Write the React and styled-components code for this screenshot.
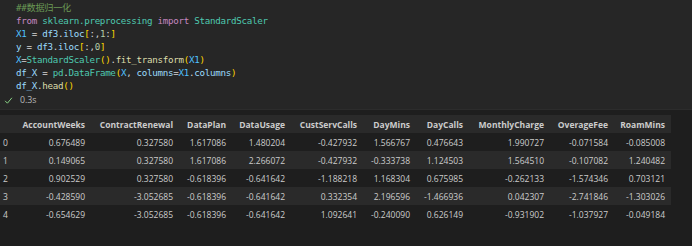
import React from "react";
import styled, { createGlobalStyle } from "styled-components";

const GlobalStyle = createGlobalStyle`
  html, body {
    margin: 0;
    padding: 0;
    background: #1e1e1e;
  }
`;

const code = [
  [["c", "##数据归一化"]],
  [["k", "from"], ["p", " "], ["m", "sklearn.preprocessing"], ["p", " "], ["k", "import"], ["p", " "], ["m", "StandardScaler"]],
  [["C", "X1"], ["p", " = "], ["v", "df3"], ["p", "."], ["v", "iloc"], ["b", "["], ["p", ":,"], ["n", "1"], ["p", ":"], ["b", "]"]],
  [["v", "y"], ["p", " = "], ["v", "df3"], ["p", "."], ["v", "iloc"], ["b", "["], ["p", ":,"], ["n", "0"], ["b", "]"]],
  [["C", "X"], ["p", "="], ["m", "StandardScaler"], ["b", "()"], ["p", "."], ["f", "fit_transform"], ["b", "("], ["C", "X1"], ["b", ")"]],
  [["v", "df_X"], ["p", " = "], ["m", "pd"], ["p", "."], ["m", "DataFrame"], ["b", "("], ["C", "X"], ["p", ", "], ["v", "columns"], ["p", "="], ["C", "X1"], ["p", "."], ["v", "columns"], ["b", ")"]],
  [["v", "df_X"], ["p", "."], ["f", "head"], ["b", "()"]],
];

const tokenColors = {
  c: "#6a9955",
  k: "#c586c0",
  m: "#4ec9b0",
  C: "#4fc1ff",
  v: "#9cdcfe",
  p: "#d4d4d4",
  b: "#ffd700",
  n: "#b5cea8",
  f: "#dcdcaa",
};

const columns = [
  { name: "", width: 13 },
  { name: "AccountWeeks", width: 78 },
  { name: "ContractRenewal", width: 88 },
  { name: "DataPlan", width: 53 },
  { name: "DataUsage", width: 59 },
  { name: "CustServCalls", width: 72 },
  { name: "DayMins", width: 53 },
  { name: "DayCalls", width: 53 },
  { name: "MonthlyCharge", width: 81 },
  { name: "OverageFee", width: 64 },
  { name: "RoamMins", width: 57 },
];

const rows = [
  ["0.676489", "0.327580", "1.617086", "1.480204", "-0.427932", "1.566767", "0.476643", "1.990727", "-0.071584", "-0.085008"],
  ["0.149065", "0.327580", "1.617086", "2.266072", "-0.427932", "-0.333738", "1.124503", "1.564510", "-0.107082", "1.240482"],
  ["0.902529", "0.327580", "-0.618396", "-0.641642", "-1.188218", "1.168304", "0.675985", "-0.262133", "-1.574346", "0.703121"],
  ["-0.428590", "-3.052685", "-0.618396", "-0.641642", "0.332354", "2.196596", "-1.466936", "0.042307", "-2.741846", "-1.303026"],
  ["-0.654629", "-3.052685", "-0.618396", "-0.641642", "1.092641", "-0.240090", "0.626149", "-0.931902", "-1.037927", "-0.049184"],
];

const App = () => {
  return (
    <Page>
      <GlobalStyle />
      <CodeCell>
        <Code>
          {code.map((line, i) => (
            <Line key={i}>
              {line.map(([t, text], j) => (
                <Token key={j} $color={tokenColors[t]}>
                  {text}
                </Token>
              ))}
            </Line>
          ))}
        </Code>
        <Status>
          <Check viewBox="0 0 10 10">
            <path d="M1.2 5.4 L3.8 8 L8.8 2" fill="none" stroke="#89d185" strokeWidth="1.1" />
          </Check>
          <Time>0.3s</Time>
        </Status>
      </CodeCell>
      <Output>
        <Table>
          <colgroup>
            {columns.map((c, i) => (
              <col key={i} style={{ width: c.width }} />
            ))}
          </colgroup>
          <thead>
            <HeadRow>
              {columns.map((c, i) => (
                <Th key={i}>{c.name}</Th>
              ))}
            </HeadRow>
          </thead>
          <tbody>
            {rows.map((r, i) => (
              <Row key={i} $striped={i % 2 === 1}>
                <Index>{i}</Index>
                {r.map((v, j) => (
                  <Td key={j}>{v}</Td>
                ))}
              </Row>
            ))}
          </tbody>
        </Table>
      </Output>
    </Page>
  );
};

export default App;

const Page = styled.div`
  width: 692px;
  height: 246px;
  background: #1e1e1e;
  overflow: hidden;
`;

const CodeCell = styled.div`
  background: #262626;
  height: 110px;
  border-bottom: 1px solid #2c2c2c;
  box-sizing: border-box;
`;

const Code = styled.pre`
  margin: 0;
  padding: 1px 0 0 16px;
  font-family: "DejaVu Sans Mono", "Noto Sans CJK SC", monospace;
  font-size: 9.2px;
  letter-spacing: -0.29px;
  line-height: 13px;
`;

const Line = styled.div`
  height: 13px;
  white-space: pre;
`;

const Token = styled.span`
  color: ${(p) => p.$color};
`;

const Status = styled.div`
  display: flex;
  align-items: center;
  height: 16px;
  padding-left: 4px;
  gap: 7px;
`;

const Check = styled.svg`
  width: 9px;
  height: 9px;
`;

const Time = styled.span`
  font-family: "Open Sans", sans-serif;
  font-size: 8.8px;
  color: #b8b8b8;
`;

const Output = styled.div`
  padding-top: 5px;
`;

const Table = styled.table`
  border-collapse: collapse;
  table-layout: fixed;
  width: 671px;
  font-family: "Open Sans", sans-serif;
  font-size: 8.5px;
  color: #cccccc;
`;

const HeadRow = styled.tr`
  background: #2a2a2a;
  height: 18px;
`;

const Th = styled.th`
  padding: 0 6px 0 0;
  text-align: right;
  font-weight: 700;
  white-space: nowrap;
`;

const Row = styled.tr`
  height: 18px;
  background: ${(p) => (p.$striped ? "#2a2a2a" : "transparent")};
`;

const Index = styled.td`
  padding: 0 0 0 3px;
  text-align: left;
`;

const Td = styled.td`
  padding: 0 6px 0 0;
  text-align: right;
  white-space: nowrap;
`;
